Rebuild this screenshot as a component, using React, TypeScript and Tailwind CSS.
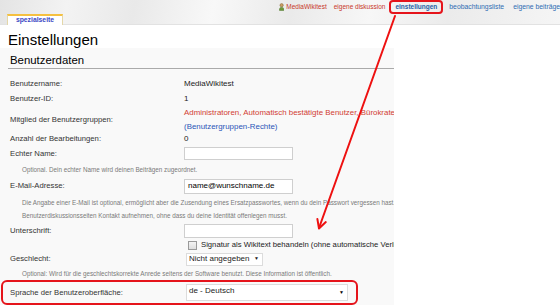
import React from "react";

function UserIcon() {
  return (
    <svg width="7" height="10" viewBox="0 0 7 10">
      <circle cx="3.5" cy="2.6" r="2.2" fill="#c9a063" stroke="#7a5a2a" strokeWidth="0.6" />
      <path d="M0.5 9.5 C0.5 6 2 5.2 3.5 5.2 C5 5.2 6.5 6 6.5 9.5 Z" fill="#6f9a3c" stroke="#3f6a1e" strokeWidth="0.6" />
    </svg>
  );
}

function Row({ label, children, h, labelClass = "" }: { label: string; children?: React.ReactNode; h: string; labelClass?: string }) {
  return (
    <div className={`flex items-center ${h}`}>
      <div className={`w-[174px] shrink-0 text-[7.7px] text-[#333] ${labelClass}`}>{label}</div>
      <div className="flex-1 min-w-0 whitespace-nowrap text-[8px] text-[#222]">{children}</div>
    </div>
  );
}

export default function App() {
  return (
    <div className="relative w-[560px] h-[305px] overflow-hidden bg-white font-['Liberation_Sans',Arial,sans-serif]">
      {/* header */}
      <div className="h-[25px] flex flex-col border-b border-[#e2e2e2] bg-[linear-gradient(100deg,#e4e4e4_0%,#f3f3f3_12%,#e9e9e9_24%,#f8f8f8_38%,#eaeaea_52%,#f7f7f7_66%,#ebebeb_80%,#f5f5f5_100%)]">
        <div className="h-[15px] flex items-center pl-[279px] whitespace-nowrap text-[6.5px]">
          <UserIcon />
          <span className="ml-[2px] text-[#c8382a]">MediaWikitest</span>
          <span className="ml-[7px] text-[#c8382a]">eigene diskussion</span>
          <span className="ml-[4px] border-2 border-[#e5141b] rounded-[4px] px-[4px] h-[14px] flex items-center font-bold text-[#1f5fa6]">einstellungen</span>
          <span className="ml-[6px] text-[6.8px] text-[#2f6db3]">beobachtungsliste</span>
          <span className="ml-[9px] text-[6.8px] text-[#2f6db3]">eigene beiträge</span>
        </div>
        <div className="h-[10px] flex items-end pl-[7px]">
          <div className="h-[11px] w-[56px] bg-white border-t-2 border-x border-t-[#f5c040] border-x-[#e4d7a8] flex items-center justify-center text-[6.8px] font-bold text-[#3c48c4] mb-[-1px]">
            spezialseite
          </div>
        </div>
      </div>

      {/* title */}
      <h1 className="h-[23px] pl-[8px] pt-[5px] text-[15px] leading-[19px] text-black">Einstellungen</h1>

      {/* panel */}
      <div className="w-[394px] h-[257px] bg-[#f9f9f9] overflow-hidden">
        <div className="ml-[8px] h-[21px] border-b border-[#aaaaaa] pl-[2px] pt-[5px] text-[11.4px] leading-[14px] text-black">
          Benutzerdaten
        </div>
        <div className="pl-[10px] pt-[7px]">
          <Row label="Benutzername:" h="h-[15px]">MediaWikitest</Row>
          <Row label="Benutzer-ID:" h="h-[15px]">1</Row>
          <div className="flex items-center h-[27px]">
            <div className="w-[174px] shrink-0 text-[7.7px] text-[#333]">Mitglied der Benutzergruppen:</div>
            <div className="flex-1 whitespace-nowrap text-[7.9px] leading-[13.5px]">
              <div className="text-[#d13d33]">Administratoren, Automatisch bestätigte Benutzer, Bürokraten, Oversighter</div>
              <div className="text-[#2a56b8]">(Benutzergruppen-Rechte)</div>
            </div>
          </div>
          <Row label="Anzahl der Bearbeitungen:" h="h-[11px]">0</Row>
          <Row label="Echter Name:" h="h-[19px]">
            <div className="w-[109px] h-[13px] bg-white border border-[#cfcfcf]" />
          </Row>
        </div>
        <div className="h-[14px] pl-[22px] flex items-center whitespace-nowrap text-[6.3px] text-[#7a7a7a]">
          Optional. Dein echter Name wird deinen Beiträgen zugeordnet.
        </div>
        <div className="pl-[10px]">
          <Row label="E-Mail-Adresse:" h="h-[18px]">
            <div className="w-[109px] h-[15px] bg-white border border-[#cfcfcf] flex items-center pl-[3px] text-[8px] text-black">name@wunschname.de</div>
          </Row>
        </div>
        <div className="h-[27px] pl-[22px] pt-[1px] whitespace-nowrap text-[6.3px] leading-[13px] text-[#7a7a7a]">
          <div>Die Angabe einer E-Mail ist optional, ermöglicht aber die Zusendung eines Ersatzpasswortes, wenn du dein Passwort vergessen hast. Du kannst auch anderen Benutzern</div>
          <div>Benutzerdiskussionsseiten Kontakt aufnehmen, ohne dass du deine Identität offenlegen musst.</div>
        </div>
        <div className="pl-[10px]">
          <Row label="Unterschrift:" h="h-[17px]">
            <div className="w-[109px] h-[14px] bg-white border border-[#cfcfcf]" />
          </Row>
          <div className="h-[12px] flex items-center pl-[178px] whitespace-nowrap">
            <div className="w-[9px] h-[9px] border border-[#9a9a9a] bg-[linear-gradient(#f4f4f4,#dedede)] shrink-0" />
            <span className="ml-[4px] text-[7.7px] text-[#222]">Signatur als Wikitext behandeln (ohne automatische Verlinkung)</span>
          </div>
          <Row label="Geschlecht:" h="h-[16px]">
            <div className="ml-[2px] w-[77px] h-[13px] bg-white border border-[#dcdcdc] flex items-center justify-between pl-[2px] pr-[3px] text-[8px] text-[#222]">
              <span>Nicht angegeben</span>
              <span className="text-[5px]">▼</span>
            </div>
          </Row>
        </div>
        <div className="h-[13px] pl-[22px] flex items-center whitespace-nowrap text-[6.3px] text-[#7a7a7a]">
          Optional: Wird für die geschlechtskorrekte Anrede seitens der Software benutzt. Diese Information ist öffentlich.
        </div>
        <div className="ml-[1px] w-[357px] h-[25px] border-2 border-[#e5141b] rounded-[6px] flex items-center pl-[7px]">
          <div className="w-[176px] shrink-0 text-[7.7px] text-[#333]">Sprache der Benutzeroberfläche:</div>
          <div className="w-[162px] h-[17px] bg-white border border-[#dcdcdc] flex justify-between pl-[2px] pr-[3px]">
            <span className="text-[8px] text-[#222] leading-[11px]">de - Deutsch</span>
            <span className="text-[5px] self-center">▼</span>
          </div>
        </div>
      </div>

      {/* annotation arrow */}
      <svg className="absolute inset-0 pointer-events-none" width="560" height="305" viewBox="0 0 560 305">
        <line x1="395" y1="16" x2="319" y2="228" stroke="#ee1111" strokeWidth="2" strokeLinecap="round" />
        <polyline points="325.8,222.1 319,228.5 317.4,219.1" fill="none" stroke="#ee1111" strokeWidth="2" strokeLinecap="round" strokeLinejoin="round" />
      </svg>
    </div>
  );
}
